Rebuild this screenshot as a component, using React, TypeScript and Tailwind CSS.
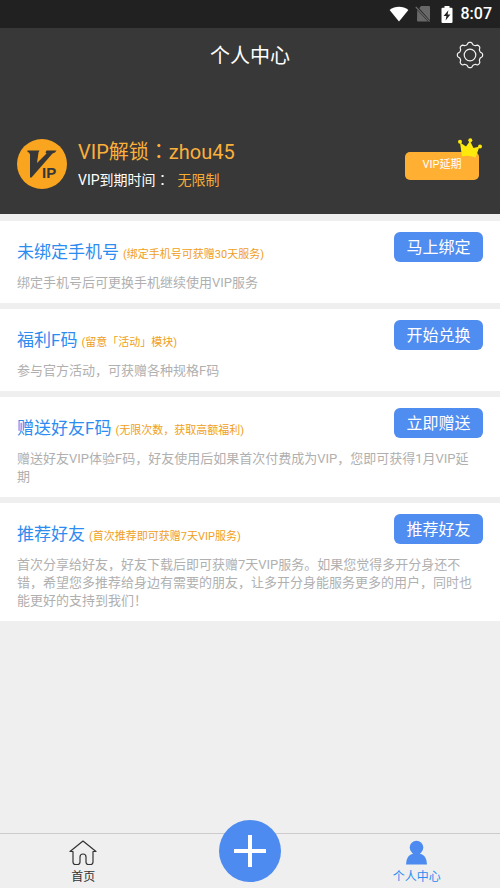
import type { ReactNode } from "react";

const gearPath =
  Array.from({ length: 96 }, (_, i) => {
    const a = (i / 96) * Math.PI * 2;
    const wave = Math.cos(8 * a);
    const r = 11.6 + 1.1 * Math.tanh(wave * 1.8);
    return `${i === 0 ? "M" : "L"}${(14 + r * Math.cos(a)).toFixed(2)} ${(14 + r * Math.sin(a)).toFixed(2)}`;
  }).join("") + "Z";

function GearIcon() {
  return (
    <svg viewBox="0 0 28 28" className="size-7" fill="none" stroke="#f2f2f2" strokeWidth="1.2" strokeLinejoin="round">
      <path d={gearPath} />
      <circle cx="14" cy="14" r="5.8" />
    </svg>
  );
}

function StatusBar() {
  return (
    <div className="flex h-7 items-center justify-end bg-[#212121] pr-2 text-white">
      <svg viewBox="0 0 20 16" className="mr-1.5 h-4 w-5" fill="currentColor">
        <path d="M10 15.5 .6 4C6 -.3 14-.3 19.4 4Z" />
      </svg>
      <svg viewBox="0 0 16 18" className="mr-2.5 h-[18px] w-4">
        <path d="M6 1h8a1 1 0 0 1 1 1v13.5L4.2 3.2ZM2.2 5 13 16.5H3a1 1 0 0 1-1-1Z" fill="#686868" />
        <path d="M.8 2 14.6 16.6" stroke="#686868" strokeWidth="1.3" />
      </svg>
      <svg viewBox="0 0 12 17" className="mr-2 h-[17px] w-3">
        <path d="M3.5 0h5v1.8h2a1 1 0 0 1 1 1V16a1 1 0 0 1-1 1h-9a1 1 0 0 1-1-1V2.800a1 1 0 0 1 1-1h2Z" fill="#fff" />
        <path d="M7.400 4.200 2.600 10h2.800l-.8 4.600L9.400 8.600H6.600Z" fill="#212121" />
      </svg>
      <span className="text-base leading-7 font-medium">8:07</span>
    </div>
  );
}

function VipBadge() {
  return (
    <svg viewBox="0 0 50 50" className="size-[50px] shrink-0">
      <circle cx="25" cy="25" r="25" fill="#f9a51f" />
      <path d="M10.500 11.500H22.500L21.500 13.500 20 24 29.500 14.500 28.500 13.500 29.500 11.500H39.500L38 13.500 35.500 14.500 14.500 38.500H13V15.500L12 13.500 10.500 13Z" fill="#373737" />
      <text x="25" y="38.500" fontSize="15" fontWeight="700" fill="#373737" className="font-['Liberation_Sans',sans-serif]">
        IP
      </text>
    </svg>
  );
}

function Crown() {
  return (
    <svg viewBox="0 0 26 20" className="absolute -top-3.5 -right-1 h-5 w-[26px]" fill="#fdea0c">
      <path d="M5 18.500 3 4.500 9 8.500 13 3 16.500 10 22.500 8.500 18.500 19.500Q11 16.500 5 18.500Z" />
      <circle cx="3" cy="3.700" r="2" />
      <circle cx="13.300" cy="2.200" r="2" />
      <circle cx="23" cy="8.500" r="2" />
    </svg>
  );
}

function Colon() {
  return <span className="font-['Noto_Sans_CJK_TC',sans-serif]">：</span>;
}

type Offer = { title: string; note: string; action: string; lines: string[] };

const offers: Offer[] = [
  {
    title: "未绑定手机号",
    note: "(绑定手机号可获赠30天服务)",
    action: "马上绑定",
    lines: ["绑定手机号后可更换手机继续使用VIP服务"],
  },
  {
    title: "福利F码",
    note: "(留意「活动」模块)",
    action: "开始兑换",
    lines: ["参与官方活动，可获赠各种规格F码"],
  },
  {
    title: "赠送好友F码",
    note: "(无限次数，获取高额福利)",
    action: "立即赠送",
    lines: ["赠送好友VIP体验F码，好友使用后如果首次付费成为VIP，您即可获得1月VIP延", "期"],
  },
  {
    title: "推荐好友",
    note: "(首次推荐即可获赠7天VIP服务)",
    action: "推荐好友",
    lines: [
      "首次分享给好友，好友下载后即可获赠7天VIP服务。如果您觉得多开分身还不",
      "错，希望您多推荐给身边有需要的朋友，让多开分身能服务更多的用户，同时也",
      "能更好的支持到我们！",
    ],
  },
];

function OfferCard({ title, note, action, lines }: Offer) {
  return (
    <section className="bg-white px-[17px] pt-[11px] pb-[11px]">
      <div className="flex h-[42px] items-start justify-between">
        <div className="flex items-baseline gap-1 pt-2">
          <h2 className="text-[17px] leading-6 text-[#2d8cf0]">{title}</h2>
          <span className="text-[11px] leading-6 text-[#f0a020]">{note}</span>
        </div>
        <button type="button" className="h-[30px] w-[89px] rounded-md bg-[#4f8df0] text-base leading-8 text-white">
          {action}
        </button>
      </div>
      <p className="text-[13px] leading-[18px] text-[#b0b0b0]">
        {lines.map((line) => (
          <span key={line} className="block">
            {line}
          </span>
        ))}
      </p>
    </section>
  );
}

function Tab({ label, color, children }: { label: string; color: string; children: ReactNode }) {
  return (
    <a href="#" className={`flex flex-1 flex-col items-center pt-1.5 text-xs leading-4 ${color}`}>
      {children}
      <span className="mt-[3px]">{label}</span>
    </a>
  );
}

export default function App() {
  return (
    <div className="flex min-h-screen flex-col bg-[#efefef] font-[Roboto,'Noto_Sans_CJK_SC',sans-serif]">
      <StatusBar />
      <header className="bg-[#383838] pb-6 text-white">
        <div className="grid h-[54px] grid-cols-[1fr_auto_1fr] items-center pr-4">
          <h1 className="col-start-2 pt-0.5 pl-4 text-xl">个人中心</h1>
          <button type="button" aria-label="设置" className="justify-self-end">
            <GearIcon />
          </button>
        </div>
        <div className="mt-[55px] flex items-center gap-[11px] px-[17px]">
          <VipBadge />
          <div className="flex-1">
            <p className="text-xl leading-7 text-[#fbb03b]">
              VIP解锁<Colon />zhou45
            </p>
            <p className="mt-[3px] text-sm leading-5">
              VIP到期时间<Colon />
              <span className="ml-2 text-[#f5ab35]">无限制</span>
            </p>
          </div>
          <button type="button" className="relative mt-1 mr-1 h-7 w-[74px] rounded-[5px] bg-[#ffb033] text-[11px] text-white">
            VIP延期
            <Crown />
          </button>
        </div>
      </header>
      <main className="mt-[7px] mb-auto flex flex-col gap-1.5">
        {offers.map((offer) => (
          <OfferCard key={offer.title} {...offer} />
        ))}
      </main>
      <nav className="flex h-[55px] border-t border-[#cbcbcb]">
        <Tab label="首页" color="text-[#333333]">
          <svg viewBox="0 0 28 26" className="h-[26px] w-7" fill="none" stroke="#333" strokeWidth="1.2" strokeLinejoin="round">
            <path d="M14 1 1 11.500H4V22Q4 24.500 6.500 24.500H8.500Q11 24.500 11 22V17Q11 14 14 14T17 17V22Q17 24.500 19.500 24.500H21.500Q24 24.500 24 22V11.500H27Z" />
          </svg>
        </Tab>
        <div className="flex flex-1 items-start justify-center">
          <button type="button" aria-label="添加" className="-mt-3.5 flex size-[62px] items-center justify-center rounded-full bg-[#4d8bf0]">
            <svg viewBox="0 0 32 32" className="size-8" stroke="#fff" strokeWidth="4">
              <path d="M16 0V32M0 16H32" />
            </svg>
          </button>
        </div>
        <Tab label="个人中心" color="text-[#2d8cf0]">
          <svg viewBox="0 0 28 26" className="h-[26px] w-7" fill="#4d8bf0">
            <circle cx="13.500" cy="7.500" r="6.800" />
            <path d="M3 24.500Q3 15.500 10 13.500V11H17V13.500Q24 15.500 24 24.500Z" />
          </svg>
        </Tab>
      </nav>
    </div>
  );
}
